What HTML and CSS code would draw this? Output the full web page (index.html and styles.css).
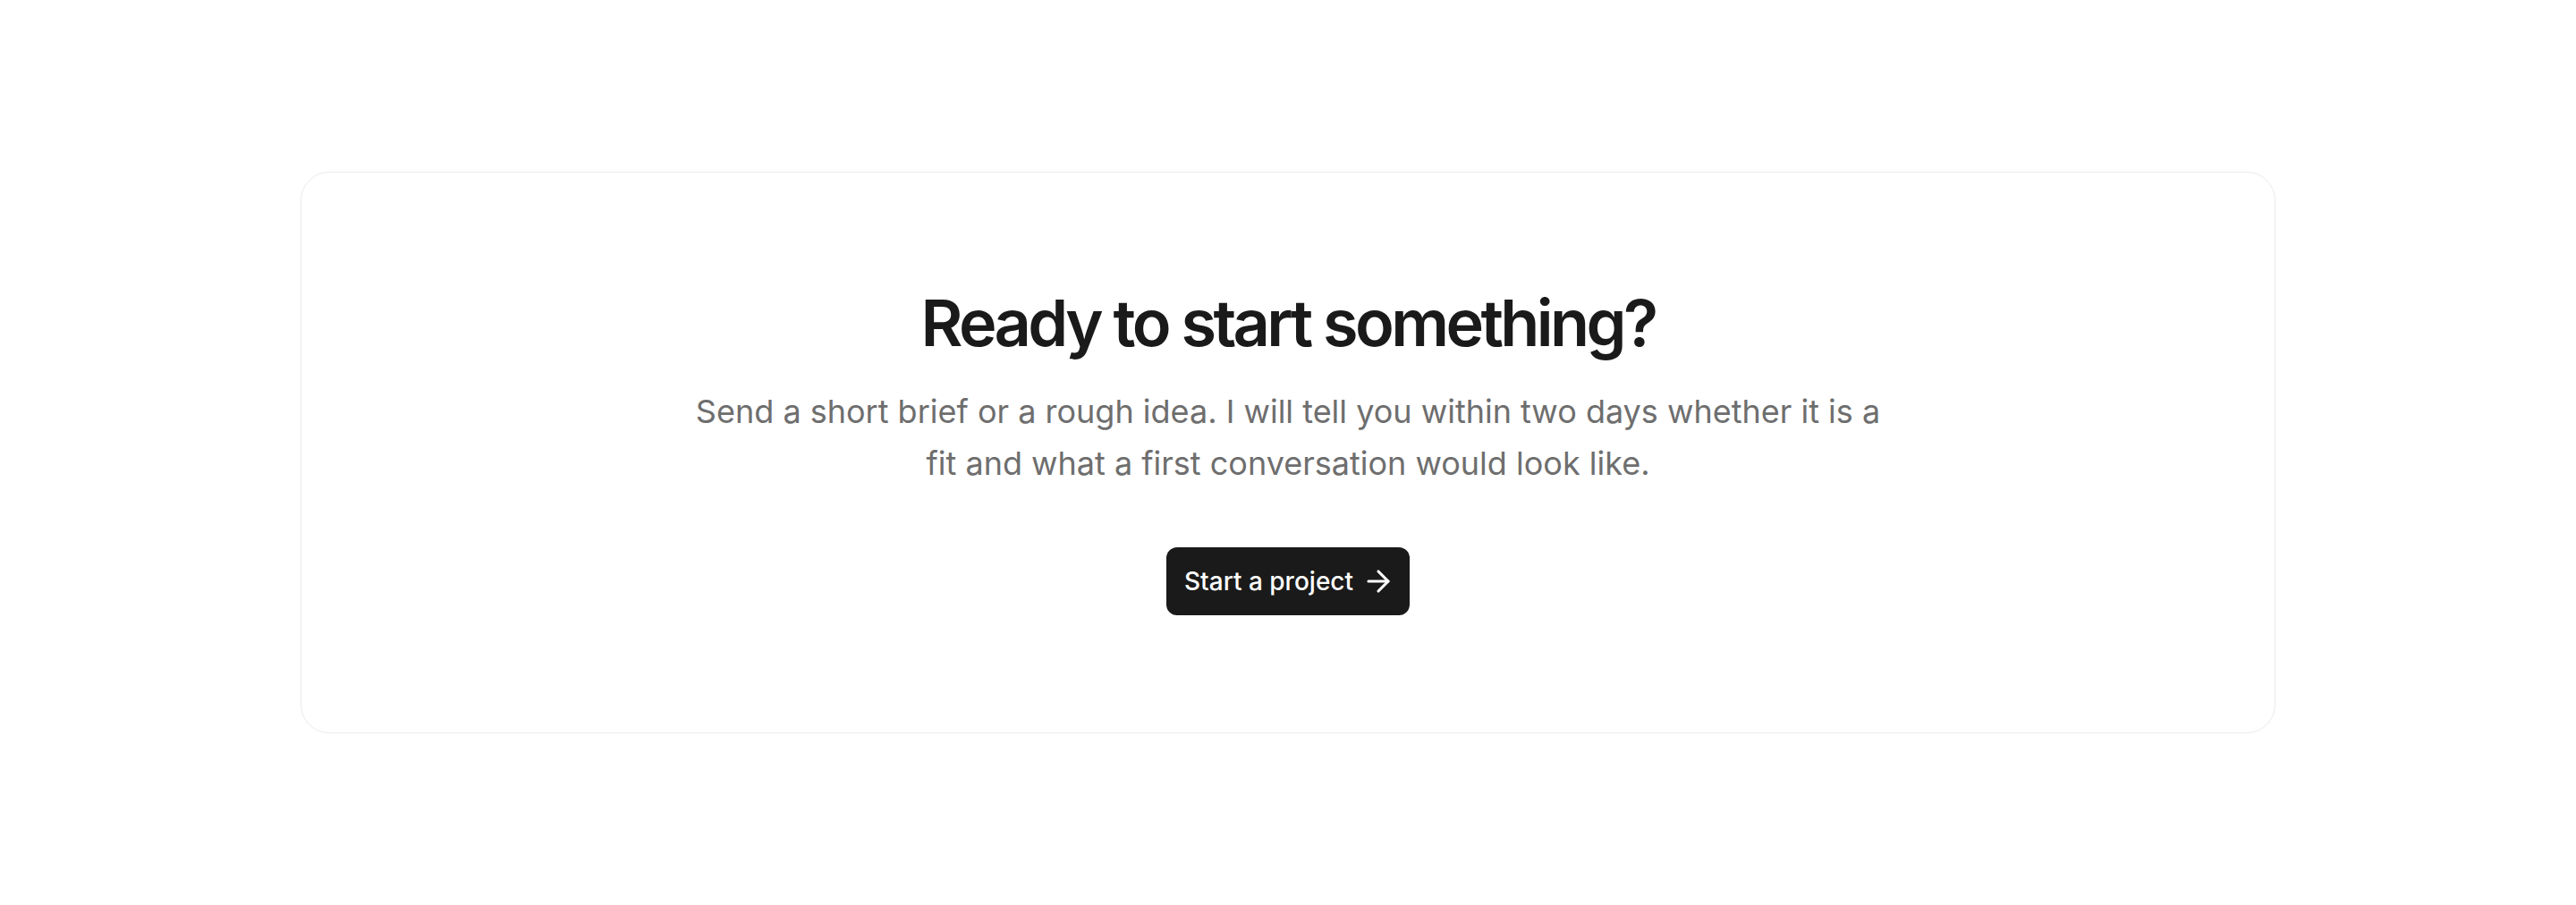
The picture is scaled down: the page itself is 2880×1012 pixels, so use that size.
FILE: index.html
```html
<!DOCTYPE html>
<html lang="en">
<head>
    <meta charset="UTF-8">
    <title>Start a project</title>
    <link rel="stylesheet" href="styles.css">
</head>
<body>
    <section class="cta">
        <h2>Ready to start something?</h2>
        <p>Send a short brief or a rough idea. I will tell you within two days whether it is a fit and what a first conversation would look like.</p>
        <a class="btn" href="#contact">
            Start a project
            <svg class="arrow" width="22" height="22" viewBox="5 5 14 14" fill="none" stroke="currentColor" stroke-width="2" stroke-linecap="round" stroke-linejoin="round">
                <path d="M5 12h14"/>
                <path d="M12 5l7 7-7 7"/>
            </svg>
        </a>
    </section>
</body>
</html>
```

FILE: styles.css
```css
body { margin: 0; background: #fff; font-family: Inter, "Noto Sans", sans-serif; color: #1a1a1a; }
.cta { width: 2208px; box-sizing: border-box; margin: 192px auto 0; padding: 128px 40px 131px; border: 1px solid #ebebeb; border-radius: 32px; text-align: center; }
.cta h2 { margin: 0; font-size: 72px; line-height: 1.1; font-weight: 600; letter-spacing: -0.05em; }
.cta p { max-width: 1340px; margin: 32px auto 0; font-size: 36px; line-height: 1.6; color: #6e6e6e; }
.btn { display: inline-flex; align-items: center; gap: 17px; height: 76px; box-sizing: border-box; margin-top: 65px; padding: 0 24px 0 20px; background: #1a1a1a; color: #fff; border-radius: 12px; font-size: 28px; font-weight: 500; text-decoration: none; }
.arrow { overflow: visible; }
```
